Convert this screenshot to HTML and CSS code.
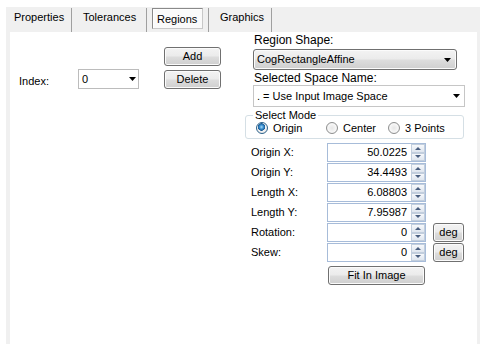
FILE: index.html
```html
<!DOCTYPE html>
<html lang="en">
<head>
    <meta charset="UTF-8">
    <title>Region Editor</title>
    <link rel="stylesheet" href="styles.css">
</head>
<body>
    <div class="tabctl">
        <div class="tabs">
            <div class="tab tab-props">Properties</div>
            <div class="tab-sep"></div>
            <div class="tab tab-tol">Tolerances</div>
            <div class="tab-sep"></div>
            <div class="tab tab-regions"><span class="tab-active">Regions</span></div>
            <div class="tab-sep"></div>
            <div class="tab tab-graphics">Graphics</div>
            <div class="tab-sep"></div>
        </div>

        <div class="panel">
            <!-- left side: index picker and add/delete -->
            <div class="left">
                <div class="index-label">Index:</div>
                <div class="combo combo-index">
                    <span class="combo-text">0</span>
                    <svg class="combo-arrow" width="7" height="4" viewBox="0 0 7 4"><path d="M0 0h7L3.5 4z"/></svg>
                </div>
                <div class="btn-col">
                    <button class="btn btn-add">Add</button>
                    <button class="btn btn-delete">Delete</button>
                </div>
            </div>

            <!-- right side: region shape settings -->
            <div class="right">
                <div class="lbl-big">Region Shape:</div>
                <div class="combo combo-shape">
                    <span class="combo-text">CogRectangleAffine</span>
                    <svg class="combo-arrow" width="7" height="4" viewBox="0 0 7 4"><path d="M0 0h7L3.5 4z"/></svg>
                </div>
                <div class="lbl-big lbl-space">Selected Space Name:</div>
                <div class="combo combo-space">
                    <span class="combo-text">. = Use Input Image Space</span>
                    <svg class="combo-arrow" width="7" height="4" viewBox="0 0 7 4"><path d="M0 0h7L3.5 4z"/></svg>
                </div>

                <fieldset class="mode">
                    <legend>Select Mode</legend>
                    <div class="radios">
                        <label class="radio r-origin"><span class="radio-dot checked"></span>Origin</label>
                        <label class="radio r-center"><span class="radio-dot"></span>Center</label>
                        <label class="radio r-points"><span class="radio-dot"></span>3 Points</label>
                    </div>
                </fieldset>

                <div class="rows">
                    <div class="row">
                        <div class="row-label">Origin X:</div>
                        <div class="num"><span class="num-val">50.0225</span><span class="spin"><span class="spin-up"></span><span class="spin-down"></span></span></div>
                    </div>
                    <div class="row">
                        <div class="row-label">Origin Y:</div>
                        <div class="num"><span class="num-val">34.4493</span><span class="spin"><span class="spin-up"></span><span class="spin-down"></span></span></div>
                    </div>
                    <div class="row">
                        <div class="row-label">Length X:</div>
                        <div class="num"><span class="num-val">6.08803</span><span class="spin"><span class="spin-up"></span><span class="spin-down"></span></span></div>
                    </div>
                    <div class="row">
                        <div class="row-label">Length Y:</div>
                        <div class="num"><span class="num-val">7.95987</span><span class="spin"><span class="spin-up"></span><span class="spin-down"></span></span></div>
                    </div>
                    <div class="row">
                        <div class="row-label">Rotation:</div>
                        <div class="num"><span class="num-val">0</span><span class="spin"><span class="spin-up"></span><span class="spin-down"></span></span></div>
                        <button class="btn btn-deg">deg</button>
                    </div>
                    <div class="row">
                        <div class="row-label">Skew:</div>
                        <div class="num"><span class="num-val">0</span><span class="spin"><span class="spin-up"></span><span class="spin-down"></span></span></div>
                        <button class="btn btn-deg">deg</button>
                    </div>
                </div>

                <button class="btn btn-fit">Fit In Image</button>
            </div>
        </div>
    </div>
</body>
</html>
```

FILE: styles.css
```css
body {
    margin: 0;
    background: #fff;
    font-family: "Liberation Sans", Arial, sans-serif;
    font-size: 11px;
    color: #000;
    overflow: hidden;
    height: 344px;
}

.tabctl {
    margin: 7px 8px 0 6px;
    height: 337px;
    background: #f0f0f0;
    display: flex;
    flex-direction: column;
}

/* tab strip */
.tabs {
    height: 25px;
    display: flex;
    flex-shrink: 0;
}

.tab {
    box-sizing: border-box;
    padding-top: 4px;
    line-height: 13px;
    padding-left: 11px;
}

.tab-props {
    width: 65px;
    padding-left: 8px;
}

.tab-tol {
    width: 74px;
}

.tab-regions {
    width: 61px;
    padding: 0 0 0 5px;
}

.tab-graphics {
    width: 62px;
}

.tab-sep {
    width: 1px;
    margin-top: 1px;
    height: 24px;
    background: #a0a0a0;
}

.tab-active {
    display: block;
    box-sizing: border-box;
    width: 51px;
    height: 21px;
    margin-top: 1px;
    padding: 4px 0 0 4px;
    line-height: 13px;
    border: 1px solid #8a8a8a;
    border-right-color: #c8c8c8;
    border-bottom-color: #c8c8c8;
    box-shadow: inset 1px 1px 0 #fff;
    background: #fafafa;
}

.panel {
    flex: 1;
    margin: 0 3px 0 4px;
    background: #fff;
    display: flex;
    align-items: flex-start;
}

/* left column */
.left {
    width: 235px;
    box-sizing: border-box;
    display: flex;
    align-items: flex-end;
    padding: 15px 0 0 9px;
}

.index-label {
    width: 59px;
    line-height: 14px;
    margin-bottom: 1px;
}

.combo {
    box-sizing: border-box;
    display: flex;
    align-items: center;
    justify-content: space-between;
    border: 1px solid #bcbcbc;
    background: #fff;
    padding: 0 4px 0 3px;
}

.combo-text {
    line-height: 13px;
}

.combo-arrow {
    fill: #000;
    flex-shrink: 0;
}

.combo-index {
    width: 61px;
    height: 20px;
    margin-right: 25px;
    padding-right: 2px;
}

.btn-col {
    display: flex;
    flex-direction: column;
    gap: 4px;
}

.btn {
    box-sizing: border-box;
    font-family: "Liberation Sans", Arial, sans-serif;
    font-size: 11px;
    font-weight: normal;
    color: #000;
    padding: 0;
    border: 1px solid #707070;
    border-radius: 3px;
    background: linear-gradient(#f3f3f3 0%, #ebebeb 48%, #dddddd 52%, #cfcfcf 100%);
    box-shadow: inset 0 0 0 1px #fbfbfb;
    line-height: 15px;
}

.btn-add,
.btn-delete {
    width: 57px;
    height: 19px;
}

/* right column */
.right {
    width: 220px;
    display: flex;
    flex-direction: column;
    align-items: flex-start;
}

.lbl-big {
    font-size: 12px;
    line-height: 14px;
    margin: 1px 0 0 9px;
}

.lbl-space {
    margin-top: 1px;
}

.combo-shape {
    width: 204px;
    height: 21px;
    margin: 2px 0 0 8px;
    border-color: #707070;
    border-radius: 3px;
    background: linear-gradient(#f3f3f3 0%, #ebebeb 48%, #dddddd 52%, #cfcfcf 100%);
    box-shadow: inset 0 0 0 1px #fbfbfb;
    padding-right: 5px;
}

.combo-space {
    width: 212px;
    height: 22px;
    margin: 0 0 0 8px;
    border-color: #c6c6c6;
}

/* select mode group */
.mode {
    box-sizing: border-box;
    width: 219px;
    margin: 2px 0 0 0;
    padding: 0 0 3px 10px;
    border: 1px solid #d5dfe5;
    border-radius: 3px;
}

.mode legend {
    padding: 0 2px;
    margin-left: -3px;
    line-height: 12px;
}

.radios {
    display: flex;
    height: 14px;
    align-items: center;
}

.radio {
    display: flex;
    align-items: center;
    gap: 5px;
    line-height: 13px;
}

.r-origin {
    width: 70px;
}

.r-center {
    width: 62px;
}

.radio-dot {
    box-sizing: border-box;
    width: 12px;
    height: 12px;
    border-radius: 50%;
    border: 1px solid #8e8f8f;
    background: radial-gradient(circle at 50% 50%, #e6e6e6 0, #f7f7f7 60%, #dcdcdc 100%);
}

.radio-dot.checked {
    border-color: #2c628b;
    background: radial-gradient(circle at 45% 40%, #a9dcf6 0, #3a8fd0 2px, #1b5a93 3.5px, #f4f4f4 4px, #dedede 100%);
}

/* numeric rows */
.rows {
    margin-top: 4px;
    display: flex;
    flex-direction: column;
    gap: 1px;
}

.row {
    display: flex;
    align-items: center;
    height: 19px;
}

.row-label {
    width: 76px;
    padding-left: 6px;
    line-height: 13px;
}

.num {
    box-sizing: border-box;
    width: 99px;
    height: 19px;
    border: 1px solid #a7bcd9;
    display: flex;
    align-items: stretch;
    justify-content: flex-end;
}

.num-val {
    line-height: 17px;
    padding-right: 4px;
}

.spin {
    width: 14px;
    display: flex;
    flex-direction: column;
}

.spin-up,
.spin-down {
    flex: 1;
    box-sizing: border-box;
    border: 1px solid #c2cedd;
    background: linear-gradient(#f6f8fb, #dfe6ef);
    display: flex;
    align-items: center;
    justify-content: center;
}

.spin-up::after {
    content: "";
    border-left: 3px solid transparent;
    border-right: 3px solid transparent;
    border-bottom: 3px solid #4a5f80;
}

.spin-down::after {
    content: "";
    border-left: 3px solid transparent;
    border-right: 3px solid transparent;
    border-top: 3px solid #4a5f80;
}

.btn-deg {
    width: 31px;
    height: 19px;
    margin-left: 7px;
}

.btn-fit {
    width: 97px;
    height: 19px;
    margin: 4px 0 0 83px;
}
```
